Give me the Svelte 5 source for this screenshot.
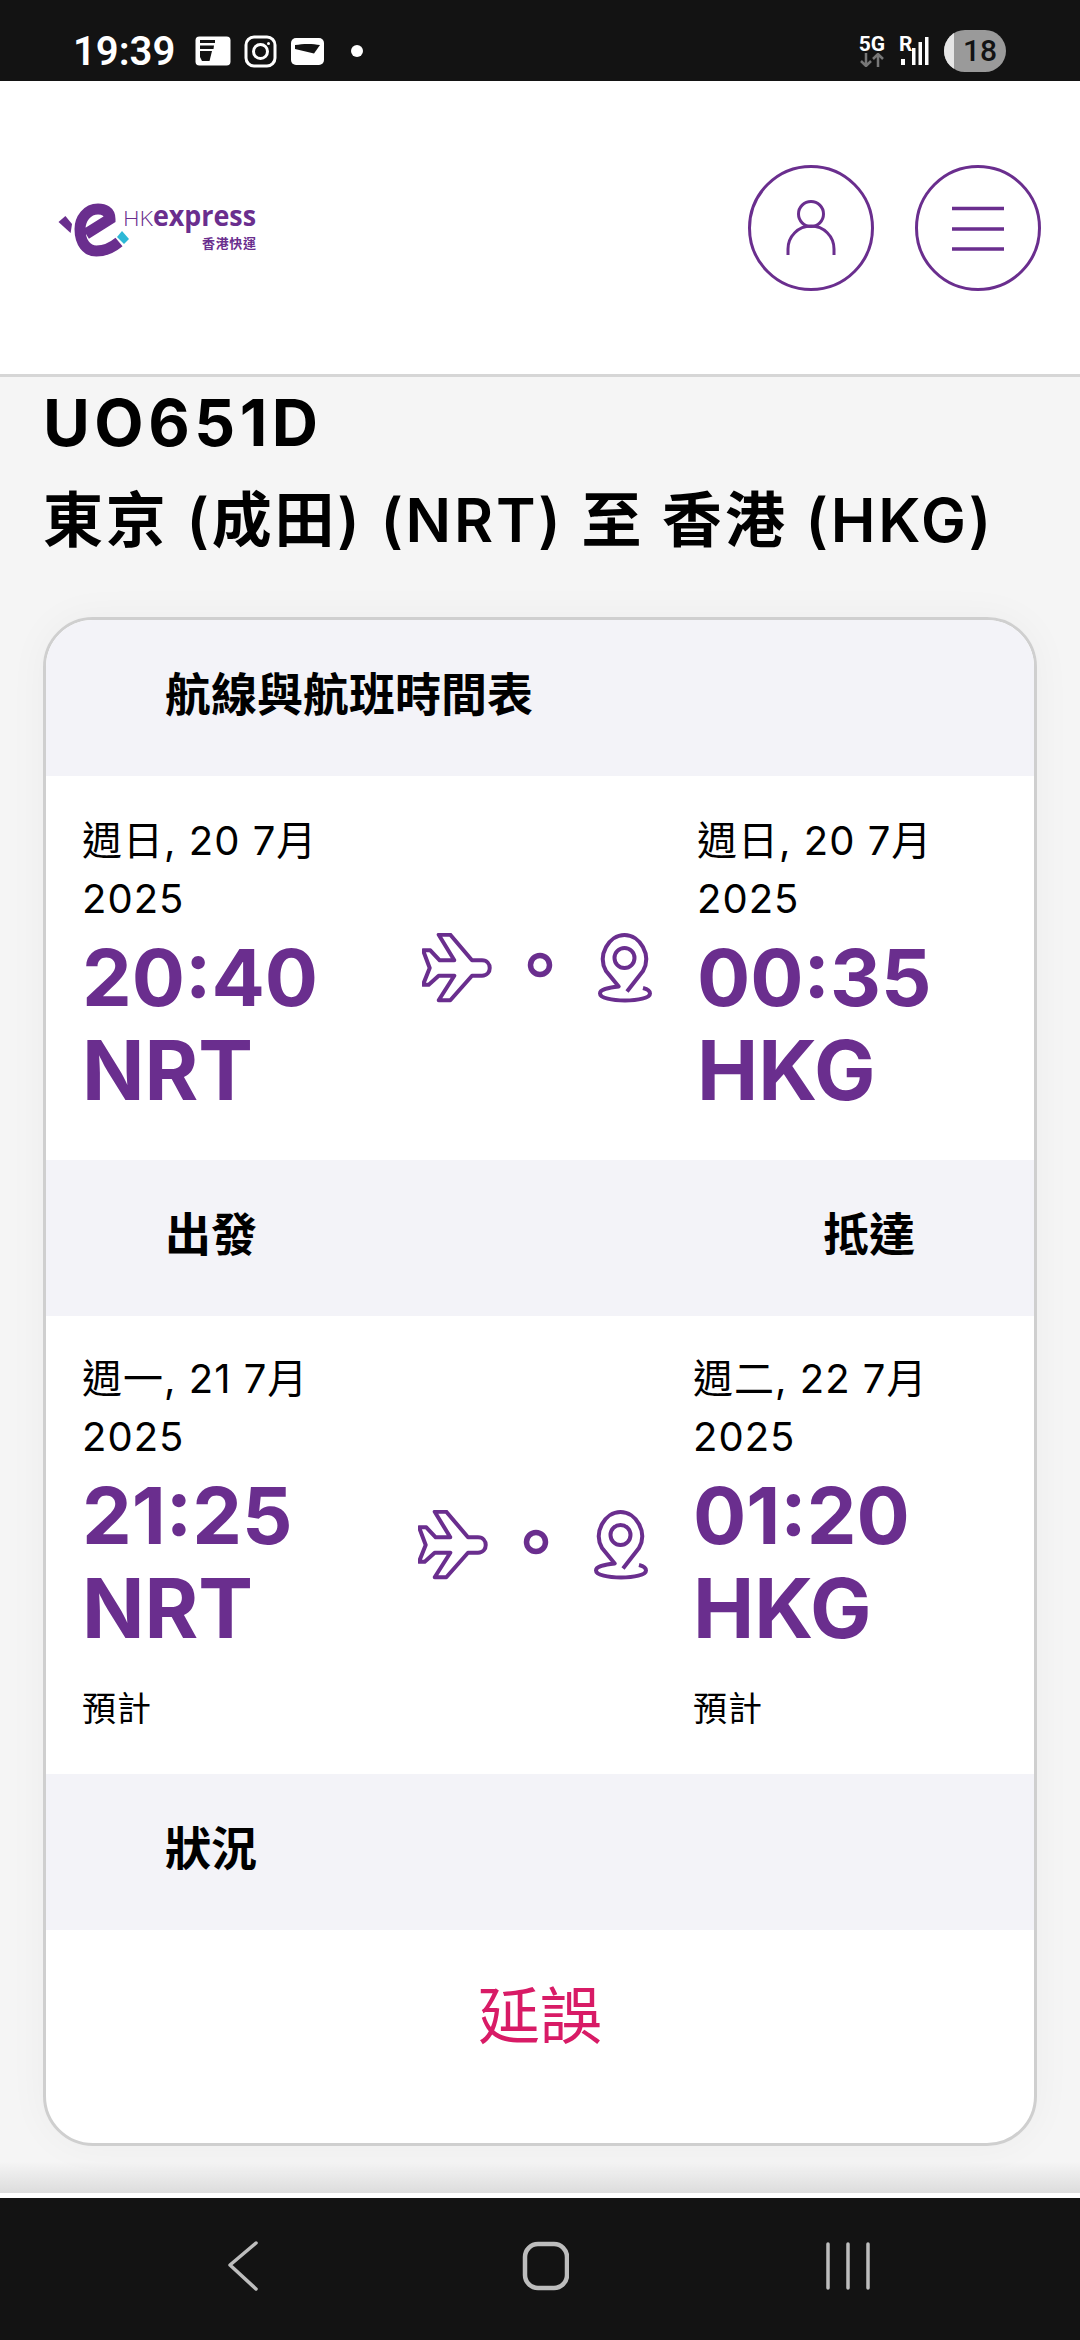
<script>
  const legs = [
    {
      id: 'scheduled',
      from: { date: '週日, 20 7月', year: '2025', time: '20:40', code: 'NRT' },
      to: { date: '週日, 20 7月', year: '2025', time: '00:35', code: 'HKG' }
    },
    {
      id: 'estimated',
      note: '預計',
      from: { date: '週一, 21 7月', year: '2025', time: '21:25', code: 'NRT' },
      to: { date: '週二, 22 7月', year: '2025', time: '01:20', code: 'HKG' }
    }
  ];
</script>

{#snippet place(p, note)}
  <div class="place">
    <div class="date">{p.date}<br />{p.year}</div>
    <div class="big time">{p.time}</div>
    <div class="big">{p.code}</div>
    {#if note}<div class="note">{note}</div>{/if}
  </div>
{/snippet}

{#snippet route(leg)}
  <div class="leg {leg.id}">
    {@render place(leg.from, leg.note)}
    <svg class="route" width="230" height="70" viewBox="0 0 230 70" fill="none" stroke="#6a2e8e" stroke-width="4" stroke-linejoin="round">
      <path d="M16.7 1.7H28.3L50 27.3H60C70.3 27.3 70.3 42.7 60 42.7H50L28.3 67.3H16.7L32.3 42.7H16.7L6.7 51.7H1L7.7 35L1 17.3H8.3L17.7 27.3H32.3Z" />
      <circle cx="118" cy="32" r="9.5" stroke-width="5.5" />
      <circle cx="202.5" cy="25" r="10" />
      <path d="M205 58.5L221 38C230 22 218 2 202.5 2C187 2 175 22 184 38L196.7 53.5C184 55 178 57 178 60.5C178 65 190 67.5 203 67.5C216 67.5 228 65 228 60.5C228 58 225 56 221 55" />
    </svg>
    {@render place(leg.to, leg.note)}
  </div>
{/snippet}

<div class="phone">
  <div class="status">
    <div class="status-left">
      <span class="clock">19:39</span>
      <svg width="36" height="30" viewBox="0 0 36 30"><rect x="0.5" y="0.5" width="35" height="29" rx="4" fill="#fff" /><path d="M5 4H20V7H5ZM5 9.5H19L18.5 13H5ZM5 15H17L14.5 25H7L5 21Z" fill="#131313" /></svg>
      <svg class="gram" width="33" height="33" viewBox="0 0 33 33" fill="none" stroke="#fff" stroke-width="3"><rect x="2" y="2" width="29" height="29" rx="8" /><circle cx="16.5" cy="16.5" r="7" /><circle cx="24.5" cy="8.5" r="1.5" fill="#fff" stroke="none" /></svg>
      <svg class="wallet" width="33" height="27" viewBox="0 0 33 27"><rect width="33" height="27" rx="5" fill="#fff" /><path d="M4 7C12 5.5 22 5.5 29 7L23 15.5L4 11Z" fill="#131313" /></svg>
      <span class="dot"></span>
    </div>
    <div class="status-right">
      <div class="net">
        <span>5G</span>
        <svg width="24" height="14" viewBox="0 0 24 14" fill="none" stroke="#777" stroke-width="2.5"><path d="M6 0V13M1 8L6 13L11 8M18 14V1M13 6L18 1L23 6" /></svg>
      </div>
      <div class="signal">
        <span>R</span>
        <svg width="28" height="28" viewBox="0 0 28 28" fill="#fff"><rect x="0" y="22" width="4" height="6" /><rect x="11" y="11" width="3.5" height="17" /><rect x="17.5" y="5" width="3.5" height="23" /><rect x="24" y="0" width="3.5" height="28" /></svg>
      </div>
      <div class="battery"><i></i><span>18</span></div>
    </div>
  </div>

  <header>
    <svg class="logo" width="210" height="65" viewBox="0 0 210 65">
      <path d="M36 37L60 22C60 14 54 12 48 12C37 12 30 22 30 32C30 46 37 54 46.4 54C56 54 63 50 69 45" fill="none" stroke="#6a2e8e" stroke-width="11" />
      <path d="M8.5 25L15.4 19L22 27L20.6 36Z" fill="#6a2e8e" />
      <path d="M67 40L72 34L79 42L74 47Z" fill="#2db8d6" />
      <text x="73" y="29" font-size="21" class="logo-hk" font-weight="300" textLength="30" lengthAdjust="spacingAndGlyphs">HK</text>
      <text x="103" y="29" font-size="28" font-weight="700" class="logo-ex" textLength="103" lengthAdjust="spacingAndGlyphs">express</text>
      <text x="152" y="51" font-size="13" font-weight="700" class="logo-zh" textLength="54">香港快運</text>
    </svg>
    <div class="header-btns">
      <button aria-label="帳戶">
        <svg width="60" height="60" viewBox="0 0 60 60" fill="none" stroke="#6a2e8e" stroke-width="3"><circle cx="30" cy="16" r="12.5" /><path d="M7 57V51A23 23 0 0 1 53 51V57" /></svg>
      </button>
      <button aria-label="選單">
        <svg width="60" height="60" viewBox="0 0 60 60" stroke="#6a2e8e" stroke-width="3.5"><path d="M4 10.5H56M4 31H56M4 51H56" /></svg>
      </button>
    </div>
  </header>

  <main>
    <h1>UO651D</h1>
    <h2>東京 (成田) (NRT) 至 香港 (HKG)</h2>

    <section class="card">
      <div class="band"><span>航線與航班時間表</span></div>
      {@render route(legs[0])}
      <div class="band split"><span>出發</span><span>抵達</span></div>
      {@render route(legs[1])}
      <div class="band"><span>狀況</span></div>
      <div class="status-value">延誤</div>
    </section>
  </main>

  <nav>
    <svg width="32" height="50" viewBox="0 0 32 50" fill="none" stroke="#bdbdbd" stroke-width="3.5" stroke-linecap="round" stroke-linejoin="round"><path d="M29 2L3 24L29 48" /></svg>
    <svg class="home" width="48" height="50" viewBox="0 0 48 50" fill="none" stroke="#bdbdbd" stroke-width="4.5"><rect x="4" y="3" width="42" height="44" rx="13" /></svg>
    <svg class="recents" width="44" height="48" viewBox="0 0 44 48" fill="none" stroke="#bdbdbd" stroke-width="3.5" stroke-linecap="round"><path d="M2 2V46M22 2V46M42 2V46" /></svg>
  </nav>
</div>

<style>
  :global(body) {
    margin: 0;
    background: #fff;
  }

  .phone {
    width: 1080px;
    height: 2340px;
    display: flex;
    flex-direction: column;
    overflow: hidden;
    font-family: Inter, "Noto Sans CJK TC", sans-serif;
    color: #000;
  }

  .status {
    height: 81px;
    flex: none;
    background: #131313;
    color: #fff;
    display: flex;
    justify-content: space-between;
    align-items: center;
    padding: 21px 74px 0 73px;
    box-sizing: border-box;
  }

  .status-left, .status-right {
    display: flex;
    align-items: center;
  }

  .clock {
    font: 600 40px Roboto, sans-serif;
    margin-right: 20px;
  }

  .gram {
    margin-left: 13px;
  }

  .wallet {
    margin-left: 14px;
  }

  .dot {
    width: 12px;
    height: 12px;
    background: #fff;
    border-radius: 50%;
    margin-left: 27px;
  }

  .net {
    display: flex;
    flex-direction: column;
    align-items: center;
    font: 700 21px/18px Roboto, sans-serif;
  }

  .signal {
    display: flex;
    margin-left: 14px;
    position: relative;
    width: 30px;
    height: 28px;
    justify-content: flex-end;
  }

  .signal span {
    position: absolute;
    left: 0;
    top: -2px;
    font: 700 21px/18px Roboto, sans-serif;
  }

  .battery {
    width: 62px;
    height: 42px;
    margin-left: 15px;
    border-radius: 21px;
    overflow: hidden;
    background: #9a9a9a;
    display: flex;
    color: #131313;
    font: 500 30px/42px Roboto, sans-serif;
  }

  .battery i {
    width: 10px;
    background: #e6e6e6;
    flex: none;
  }

  .battery span {
    flex: 1;
    text-align: center;
  }

  header {
    height: 296px;
    flex: none;
    box-sizing: border-box;
    background: #fff;
    border-bottom: 3px solid #d6d6d6;
    display: flex;
    justify-content: space-between;
    align-items: center;
    padding: 0 39px 0 50px;
  }

  .logo {
    margin-top: 3px;
  }

  .logo-hk, .logo-ex {
    fill: #6a2e8e;
    font-family: "Open Sans", sans-serif;
  }

  .logo-zh {
    fill: #6a2e8e;
    font-family: "Noto Sans CJK TC", sans-serif;
  }

  .header-btns {
    display: flex;
    gap: 41px;
  }

  .header-btns button {
    width: 126px;
    height: 126px;
    padding: 0;
    background: #fff;
    border: 3px solid #6a2e8e;
    border-radius: 50%;
    display: flex;
    align-items: center;
    justify-content: center;
  }

  main {
    flex: 1;
    box-sizing: border-box;
    padding: 0 43px;
    background: linear-gradient(#f5f5f5 98%, #dcdcdc 99.75%, #fff 99.75%);
  }

  h1 {
    margin: 13px 0 0;
    font-size: 64px;
    line-height: 66px;
    font-weight: 700;
    letter-spacing: 4.5px;
  }

  h2 {
    margin: 29px 0 0;
    font-size: 60px;
    line-height: 70px;
    font-weight: 600;
    letter-spacing: 2.8px;
    white-space: nowrap;
  }

  .card {
    margin-top: 62px;
    height: 1529px;
    box-sizing: border-box;
    background: #fff;
    border: 3px solid #cfcfcf;
    border-radius: 50px;
    overflow: hidden;
    box-shadow: 0 0 40px rgba(0, 0, 0, 0.04);
  }

  .band {
    height: 156px;
    box-sizing: border-box;
    background: #f3f3f8;
    display: flex;
    align-items: center;
    justify-content: space-between;
    padding: 0 119px 15px 119px;
    font-size: 46px;
    font-weight: 700;
  }

  .leg {
    display: flex;
    align-items: center;
    padding: 0 0 0 36px;
    box-sizing: border-box;
  }

  .leg.scheduled {
    height: 384px;
  }

  .leg.estimated {
    height: 458px;
  }

  .route {
    flex: none;
    margin-top: 0;
  }

  .place {
    width: 340px;
    flex: none;
    margin-top: -6px;
  }

  .estimated .place {
    width: 336px;
  }

  .place:last-child,
  .estimated .place:last-child {
    width: 300px;
    margin-left: 45px;
  }

  .date {
    font-size: 40px;
    line-height: 58px;
    letter-spacing: 1px;
    margin-bottom: 2px;
  }

  .big {
    font-size: 82px;
    line-height: 94px;
    font-weight: 700;
    color: #6a2e8e;
  }

  .big.time {
    font-size: 79px;
  }

  .note {
    font-size: 34px;
    line-height: 50px;
    letter-spacing: 1px;
    margin-top: 28px;
  }

  .status-value {
    height: 180px;
    box-sizing: border-box;
    padding-bottom: 16px;
    display: flex;
    align-items: center;
    justify-content: center;
    color: #d81b66;
    font-size: 62px;
  }

  nav {
    height: 142px;
    flex: none;
    box-sizing: border-box;
    background: #131313;
    display: flex;
    align-items: center;
    gap: 262px;
    padding: 0 0 6px 227px;
  }

  .recents {
    margin-left: -5px;
  }
</style>
